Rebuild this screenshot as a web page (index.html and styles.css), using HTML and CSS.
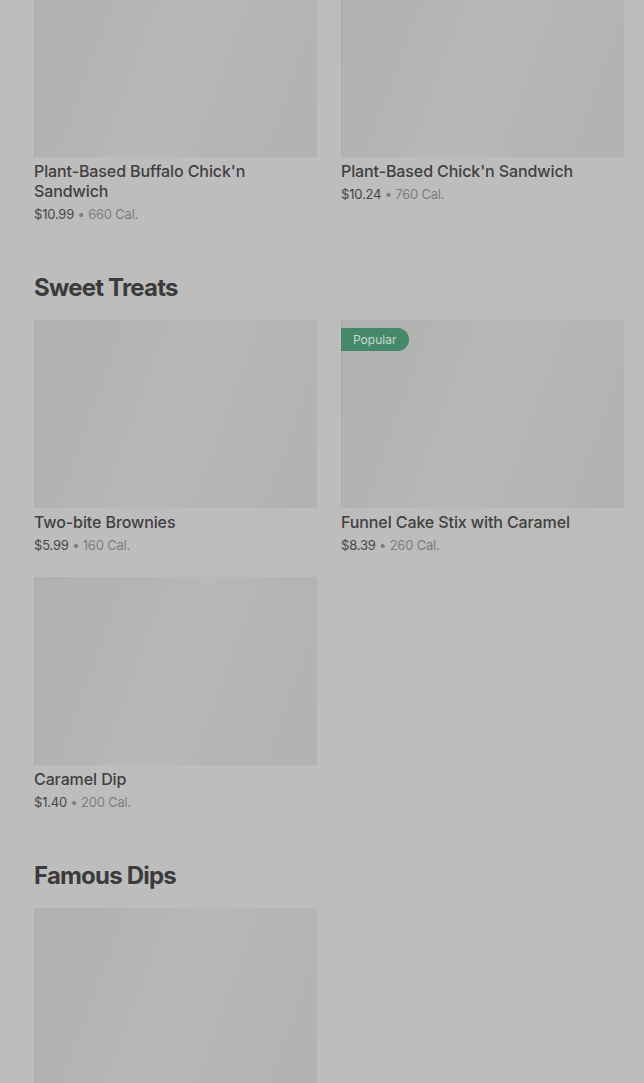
FILE: index.html
```html
<!DOCTYPE html>
<html lang="en">
<head>
<meta charset="utf-8">
<title>Menu</title>
<link rel="stylesheet" href="styles.css">
</head>
<body>
<main class="menu">
  <section class="section first">
    <div class="grid">
      <article class="card">
        <div class="thumb"></div>
        <h3 class="title">Plant-Based Buffalo Chick'n Sandwich</h3>
        <p class="meta"><span class="price">$10.99</span> • <span class="cal">660 Cal.</span></p>
      </article>
      <article class="card">
        <div class="thumb"></div>
        <h3 class="title">Plant-Based Chick'n Sandwich</h3>
        <p class="meta"><span class="price">$10.24</span> • <span class="cal">760 Cal.</span></p>
      </article>
    </div>
  </section>

  <section class="section">
    <h2 class="heading">Sweet Treats</h2>
    <div class="grid">
      <article class="card">
        <div class="thumb"></div>
        <h3 class="title">Two-bite Brownies</h3>
        <p class="meta"><span class="price">$5.99</span> • <span class="cal">160 Cal.</span></p>
      </article>
      <article class="card">
        <div class="thumb"><span class="badge">Popular</span></div>
        <h3 class="title">Funnel Cake Stix with Caramel</h3>
        <p class="meta"><span class="price">$8.39</span> • <span class="cal">260 Cal.</span></p>
      </article>
      <article class="card">
        <div class="thumb"></div>
        <h3 class="title">Caramel Dip</h3>
        <p class="meta"><span class="price">$1.40</span> • <span class="cal">200 Cal.</span></p>
      </article>
    </div>
  </section>

  <section class="section">
    <h2 class="heading">Famous Dips</h2>
    <div class="grid">
      <article class="card">
        <div class="thumb"></div>
      </article>
    </div>
  </section>
</main>
</body>
</html>
```

FILE: styles.css
```css
html, body {
  margin: 0;
  padding: 0;
  background: #bdbdbd;
  overflow: hidden;
}

body {
  font-family: Inter, "Liberation Sans", sans-serif;
  color: #3f3f3f;
}

.menu {
  padding: 0 20px 0 34px;
  margin-top: -31px;
}

.section {
  margin-top: 49px;
}

.section.first {
  margin-top: 0;
}

.heading {
  margin: 0 0 16px;
  font-size: 24px;
  line-height: 32px;
  font-weight: 700;
  letter-spacing: -0.8px;
  color: #3b3b3b;
}

.grid {
  display: grid;
  grid-template-columns: 283px 283px;
  column-gap: 24px;
  row-gap: 23px;
  align-items: start;
}

.card {
  display: flex;
  flex-direction: column;
}

.thumb {
  position: relative;
  height: 188px;
  background: linear-gradient(110deg, #b1b1b1 0%, #b3b3b3 25%, #b8b8b8 50%, #b4b4b4 75%, #b2b2b2 100%);
  box-shadow: inset 1px 0 0 #adadad;
}

.badge {
  position: absolute;
  top: 8px;
  left: 0;
  height: 23px;
  line-height: 23px;
  padding: 0 13px 0 12px;
  border-radius: 0 12px 12px 0;
  background: #43896a;
  color: #cfd6d2;
  font-size: 12px;
  font-weight: 400;
}

.title {
  margin: 4px 0 0;
  font-size: 16px;
  line-height: 20px;
  font-weight: 500;
  color: #404040;
  letter-spacing: -0.1px;
}

.meta {
  margin: 4px 0 0;
  font-size: 13px;
  line-height: 18px;
  color: #7e7e7e;
  letter-spacing: -0.2px;
}

.price {
  color: #474747;
}

.cal {
  color: #7e7e7e;
}
```
